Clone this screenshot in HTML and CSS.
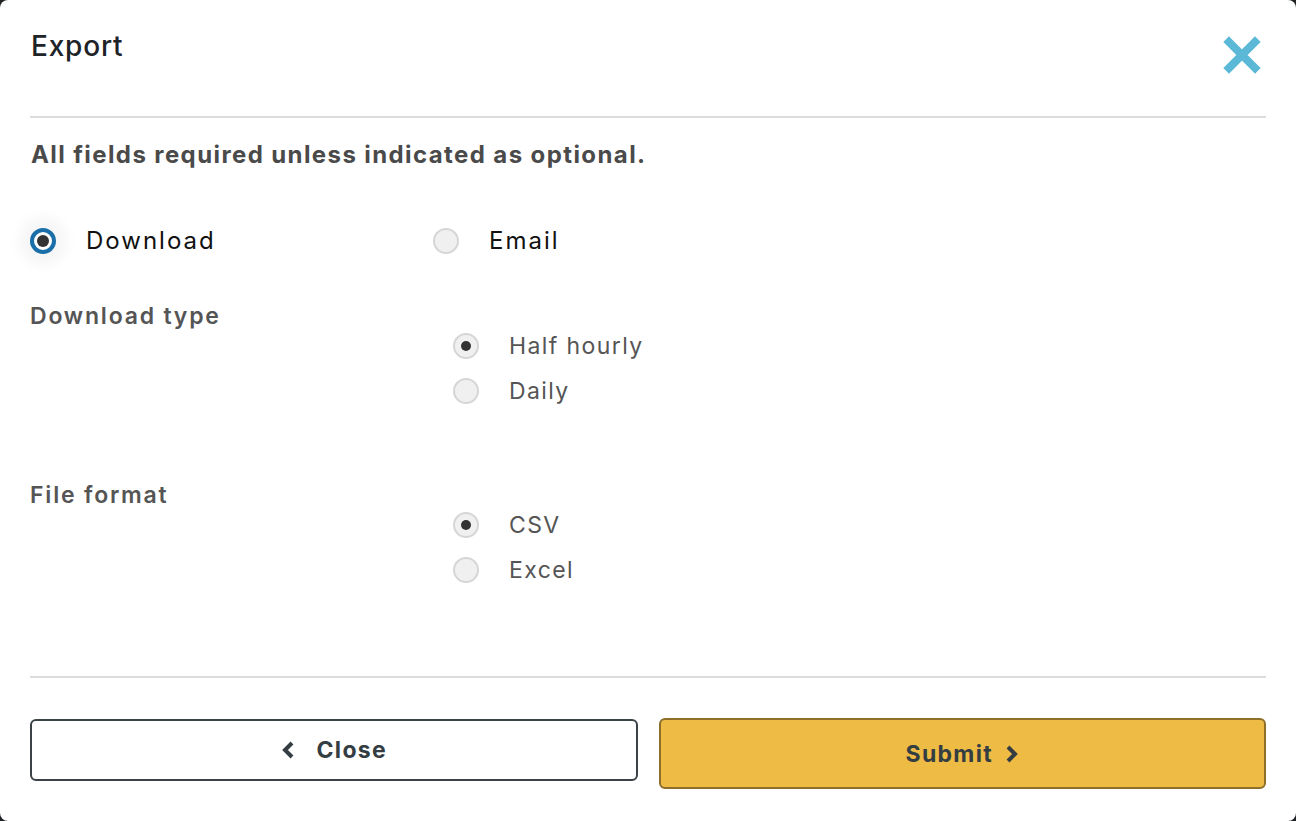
FILE: index.html
```html
<!DOCTYPE html>
<html>
<head>
<meta charset="utf-8">
<link rel="stylesheet" href="styles.css">
</head>
<body>
<div class="dialog">
  <header class="head">
    <h1 class="title">Export</h1>
    <button class="x" aria-label="Close">
      <svg width="40" height="40" viewBox="0 0 40 40"><path d="M7 7 L33 33 M33 7 L7 33" stroke="#5bb8d6" stroke-width="8" stroke-linecap="square" fill="none"/></svg>
    </button>
  </header>
  <p class="intro">All fields required unless indicated as optional.</p>
  <div class="mode">
    <label class="opt big"><span class="radio focus"><span class="dot"></span></span><span>Download</span></label>
    <label class="opt big second"><span class="radio"></span><span>Email</span></label>
  </div>
  <div class="field">
    <div class="flabel">Download type</div>
    <div class="opts">
      <label class="opt"><span class="radio"><span class="dot small"></span></span><span>Half hourly</span></label>
      <label class="opt"><span class="radio"></span><span>Daily</span></label>
    </div>
  </div>
  <div class="field">
    <div class="flabel">File format</div>
    <div class="opts">
      <label class="opt"><span class="radio"><span class="dot small"></span></span><span>CSV</span></label>
      <label class="opt"><span class="radio"></span><span>Excel</span></label>
    </div>
  </div>
  <footer class="foot">
    <button class="btn close"><svg width="14" height="20" viewBox="0 0 14 20"><path d="M11 3 L4 10 L11 17" stroke="#333d42" stroke-width="4" fill="none"/></svg><span>Close</span></button>
    <button class="btn submit"><span>Submit</span><svg width="14" height="20" viewBox="0 0 14 20"><path d="M3 3 L10 10 L3 17" stroke="#333d42" stroke-width="4" fill="none"/></svg></button>
  </footer>
</div>
</body>
</html>
```
FILE: styles.css
```css
html, body { margin: 0; padding: 0; }
body { background: #1f2224; font-family: "Inter", "Noto Sans", sans-serif; }
.dialog {
  background: #fff;
  border-radius: 8px;
  height: 821px;
  box-sizing: border-box;
  padding: 0 30px;
  display: flex;
  flex-direction: column;
}
.head {
  border-bottom: 2px solid #dcdcdc;
  display: flex;
  justify-content: space-between;
  align-items: flex-start;
  padding-top: 26px;
  height: 90px;
}
.title { margin: 0; font-size: 28px; font-weight: 500; color: #1d2327; line-height: 40px; padding-left: 1px; letter-spacing: 0.8px; }
.x { border: 0; background: none; padding: 0; margin: 9px 4px 0 0; width: 40px; height: 40px; }
.intro { margin: 23px 0 0; font-size: 24px; font-weight: 700; color: #4a4a4a; line-height: 28px; padding-left: 1px; letter-spacing: 1.4px; }
.mode { display: flex; margin-top: 58px; height: 28px; align-items: center; }
.opt { display: flex; align-items: center; gap: 30px; font-size: 23px; color: #555; height: 45px; line-height: 28px; letter-spacing: 1.4px; }
.opt.big { font-size: 24px; color: #111; gap: 30px; width: 403px; letter-spacing: 2px; }
.radio {
  width: 26px; height: 26px; box-sizing: border-box;
  border-radius: 50%; border: 2px solid #d6d6d6; background: #f0f0f0;
  display: flex; align-items: center; justify-content: center; flex: none;
}
.radio.focus { border: 4px solid #1a6fa8; background: #fff; box-shadow: 0 0 12px 12px rgba(0,0,0,0.035); }
.dot { width: 12px; height: 12px; border-radius: 50%; background: #333; }
.dot.small { width: 10px; height: 10px; }
.field { display: grid; grid-template-columns: 423px 1fr; margin-top: 47px; }
.field + .field { margin-top: 68px; }
.flabel { font-size: 23px; font-weight: 600; color: #555; line-height: 28px; letter-spacing: 1.8px; }
.opts { padding-top: 21px; display: flex; flex-direction: column; }
.foot {
  margin-top: auto;
  border-top: 2px solid #dcdcdc;
  display: flex; gap: 21px; align-items: flex-start;
  padding-top: 41px; height: 102px;
}
.btn {
  flex: 1; border-radius: 6px; font-family: inherit; font-size: 23px; font-weight: 700; color: #333d42;
  display: flex; align-items: center; justify-content: center; gap: 22px; cursor: pointer; letter-spacing: 1.3px;
}
.btn.close { height: 62px; background: #fff; border: 2px solid #3a4245; }
.btn.submit { height: 71px; background: #eebb45; border: 2px solid #8e6f2a; margin-top: -1px; gap: 12px; }
```
